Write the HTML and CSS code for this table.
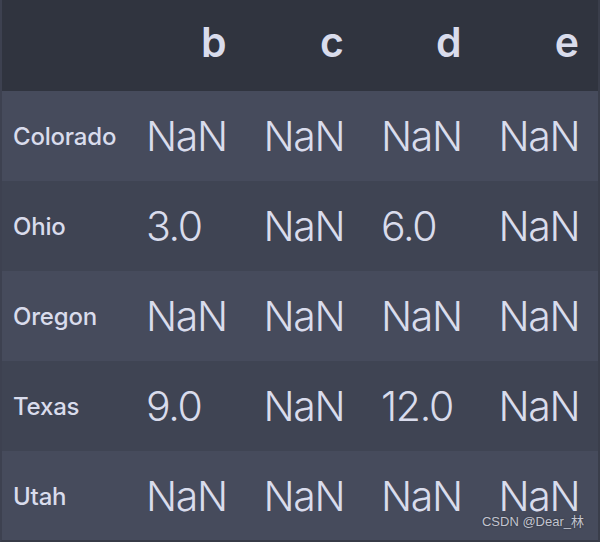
FILE: index.html
```html
<!DOCTYPE html>
<html>
<head>
<meta charset="utf-8">
<link rel="stylesheet" href="styles.css">
</head>
<body>
<div class="frame">
  <table class="df">
    <colgroup>
      <col class="c-idx"><col class="c-val"><col class="c-val"><col class="c-val"><col class="c-val">
    </colgroup>
    <thead>
      <tr><th class="corner"></th><th>b</th><th>c</th><th>d</th><th>e</th></tr>
    </thead>
    <tbody>
      <tr><th>Colorado</th><td>NaN</td><td>NaN</td><td>NaN</td><td>NaN</td></tr>
      <tr><th>Ohio</th><td>3.0</td><td>NaN</td><td>6.0</td><td>NaN</td></tr>
      <tr><th>Oregon</th><td>NaN</td><td>NaN</td><td>NaN</td><td>NaN</td></tr>
      <tr><th>Texas</th><td>9.0</td><td>NaN</td><td>12.0</td><td>NaN</td></tr>
      <tr><th>Utah</th><td>NaN</td><td>NaN</td><td>NaN</td><td>NaN</td></tr>
    </tbody>
  </table>
  <div class="mark">CSDN @Dear_林</div>
</div>
</body>
</html>
```
FILE: styles.css
```css
html, body {
  margin: 0;
  padding: 0;
  background: #393d4a;
}
.frame {
  position: relative;
  width: 600px;
  height: 542px;
  box-sizing: border-box;
  border-left: 2px solid #3d4150;
  border-right: 2px solid #3a3e4b;
  border-bottom: 2px solid #373b47;
  overflow: hidden;
}
.df {
  border-collapse: collapse;
  width: 596px;
  font-family: Inter, "Noto Sans", sans-serif;
  color: #d9dcec;
  table-layout: fixed;
}
.c-idx { width: 126px; }
.c-val { width: 117.5px; }
.df th, .df td {
  box-sizing: border-box;
  overflow: visible;
}
.df thead tr {
  background: #30343f;
  height: 91px;
}
.df thead th {
  font-size: 41px;
  font-weight: 600;
  text-align: right;
  padding: 0 19px 8px 0;
  vertical-align: middle;
}
.df tbody tr {
  height: 90px;
}
.df tbody tr:nth-child(odd) {
  background: #464b5c;
}
.df tbody tr:nth-child(even) {
  background: #3f4453;
}
.df tbody th {
  font-size: 24px;
  font-weight: 500;
  text-align: left;
  padding: 0 0 0 11px;
  white-space: nowrap;
  letter-spacing: -0.2px;
}
.df tbody td {
  font-size: 41px;
  font-weight: 300;
  text-align: left;
  padding: 0 0 0 18px;
  white-space: nowrap;
  letter-spacing: -1.3px;
}
.mark {
  position: absolute;
  right: 14px;
  bottom: 10px;
  font-family: "Liberation Sans", "Noto Sans CJK SC", sans-serif;
  font-size: 13px;
  color: #c2c5d0;
  text-shadow: 0 0 2px rgba(0,0,0,0.4);
}
```
